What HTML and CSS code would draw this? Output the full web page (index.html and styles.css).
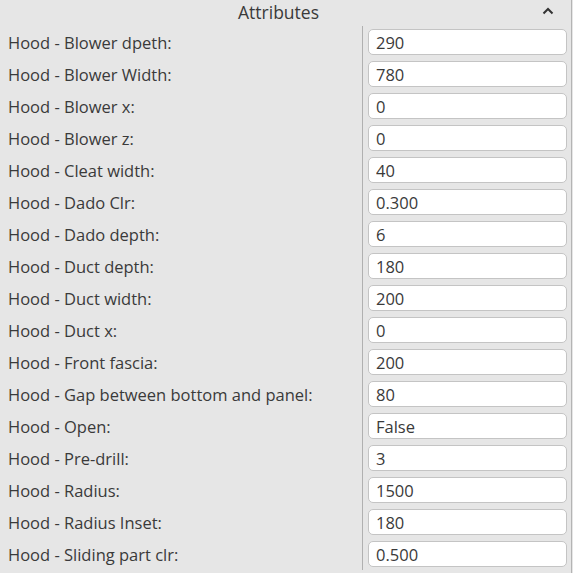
FILE: index.html
```html
<!doctype html>
<html>
<head>
    <meta charset="UTF-8">
    <title>Attributes</title>
    <link rel="stylesheet" href="styles.css">
</head>
<body>
    <div class="panel">
        <div class="panel-header">
            <span class="panel-title">Attributes</span>
            <svg class="chevron" width="12" height="8" viewBox="0 0 12 8">
                <path d="M1.5 6.5 L6 2 L10.5 6.5" fill="none" stroke="#333" stroke-width="2"/>
            </svg>
        </div>
        <div class="attr-table">
            <div class="attr-row"><div class="attr-label">Hood - Blower dpeth:</div><div class="attr-value"><input value="290"></div></div>
            <div class="attr-row"><div class="attr-label">Hood - Blower Width:</div><div class="attr-value"><input value="780"></div></div>
            <div class="attr-row"><div class="attr-label">Hood - Blower x:</div><div class="attr-value"><input value="0"></div></div>
            <div class="attr-row"><div class="attr-label">Hood - Blower z:</div><div class="attr-value"><input value="0"></div></div>
            <div class="attr-row"><div class="attr-label">Hood - Cleat width:</div><div class="attr-value"><input value="40"></div></div>
            <div class="attr-row"><div class="attr-label">Hood - Dado Clr:</div><div class="attr-value"><input value="0.300"></div></div>
            <div class="attr-row"><div class="attr-label">Hood - Dado depth:</div><div class="attr-value"><input value="6"></div></div>
            <div class="attr-row"><div class="attr-label">Hood - Duct depth:</div><div class="attr-value"><input value="180"></div></div>
            <div class="attr-row"><div class="attr-label">Hood - Duct width:</div><div class="attr-value"><input value="200"></div></div>
            <div class="attr-row"><div class="attr-label">Hood - Duct x:</div><div class="attr-value"><input value="0"></div></div>
            <div class="attr-row"><div class="attr-label">Hood - Front fascia:</div><div class="attr-value"><input value="200"></div></div>
            <div class="attr-row"><div class="attr-label">Hood - Gap between bottom and panel:</div><div class="attr-value"><input value="80"></div></div>
            <div class="attr-row"><div class="attr-label">Hood - Open:</div><div class="attr-value"><input value="False"></div></div>
            <div class="attr-row"><div class="attr-label">Hood - Pre-drill:</div><div class="attr-value"><input value="3"></div></div>
            <div class="attr-row"><div class="attr-label">Hood - Radius:</div><div class="attr-value"><input value="1500"></div></div>
            <div class="attr-row"><div class="attr-label">Hood - Radius Inset:</div><div class="attr-value"><input value="180"></div></div>
            <div class="attr-row"><div class="attr-label">Hood - Sliding part clr:</div><div class="attr-value"><input value="0.500"></div></div>
        </div>
    </div>
</body>
</html>
```

FILE: styles.css
```css
html, body {
    margin: 0;
    padding: 0;
    background-color: #e6e6e6;
}
body {
    font-family: "Open Sans", "Liberation Sans", sans-serif;
    font-size: 16.5px;
    color: #3a3a3a;
    overflow: hidden;
}
.panel {
    width: 571px;
    height: 573px;
    border-right: 1px solid #b4b4b4;
    overflow: hidden;
}
.panel-header {
    display: flex;
    align-items: center;
    height: 26px;
}
.panel-title {
    flex: 1;
    text-align: center;
    padding-left: 15px;
    margin-top: -3px;
    font-size: 17.5px;
}
.chevron {
    margin-right: 17px;
    margin-top: -4px;
}
.attr-table {
    display: flex;
    flex-direction: column;
}
.attr-row {
    display: flex;
    height: 32px;
}
.attr-label {
    width: 354px;
    padding-left: 8px;
    padding-top: 1px;
    line-height: 32px;
    white-space: nowrap;
    border-right: 1px solid #b0b0b0;
}
.attr-value {
    flex: 1;
    display: flex;
    align-items: center;
    padding: 0 4px 0 5px;
}
/* 第一行的分隔线从标题下方一点开始 */
.attr-row:first-child .attr-value {
    align-items: flex-end;
    padding-bottom: 3px;
}
.attr-value input {
    width: 100%;
    height: 26px;
    box-sizing: border-box;
    border: 1px solid #c4c4c4;
    border-radius: 5px;
    background-color: #fff;
    padding: 0 7px;
    font-family: inherit;
    font-size: 16.5px;
    color: #3a3a3a;
    outline: none;
}
```
